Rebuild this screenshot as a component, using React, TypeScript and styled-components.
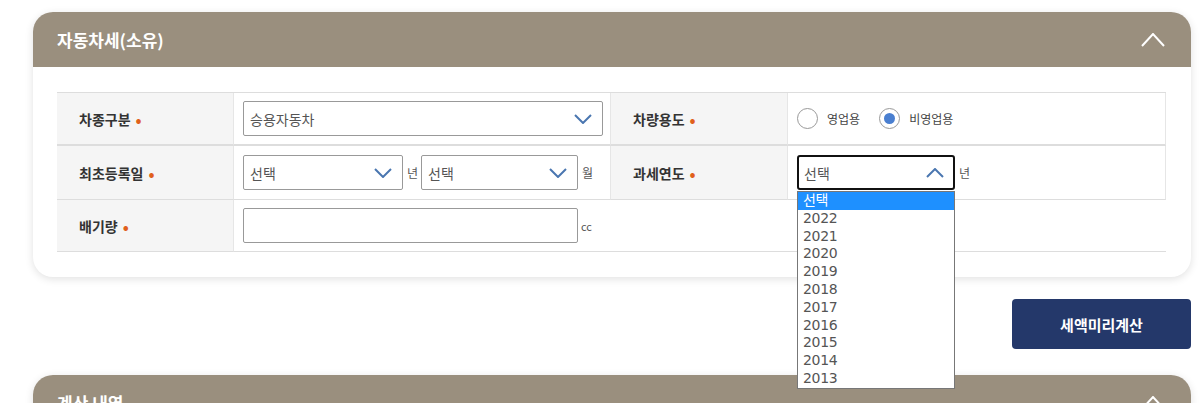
import React from 'react';
import styled, { createGlobalStyle } from 'styled-components';

const GlobalStyle = createGlobalStyle`
  html, body {
    margin: 0;
    padding: 0;
    background: #fff;
    font-family: "Noto Sans CJK KR", "Noto Sans", sans-serif;
    color: #333;
  }
  * { box-sizing: border-box; }
`;

const Page = styled.div`
  padding: 12px 9px 0 33px;
  display: flex;
  flex-direction: column;
  height: 403px;
  overflow: hidden;
`;

const Card = styled.section`
  background: #fff;
  border-radius: 20px;
  box-shadow: 0 2px 8px rgba(0, 0, 0, 0.12);
  flex-shrink: 0;
`;

const CardHeader = styled.header`
  height: 55px;
  background: #9a8f7e;
  border-radius: 20px 20px 0 0;
  display: flex;
  align-items: center;
  justify-content: space-between;
  padding: 0 26px 0 24px;
  color: #fff;
  font-size: 17px;
  font-weight: 700;
`;

const CardBody = styled.div`
  padding: 25px 25px 25px 24px;
`;

const Table = styled.div`
  display: grid;
  grid-template-columns: 177px 377px 177px 1fr;
  border-top: 1px solid #ddd;
`;

const Label = styled.div<{ $height: number; $thick?: boolean }>`
  height: ${p => p.$height}px;
  background: #f5f5f5;
  display: flex;
  align-items: center;
  padding-left: 22px;
  font-size: 14px;
  font-weight: 700;
  color: #333;
  border-bottom: ${p => (p.$thick ? '2px' : '1px')} solid #ddd;
  border-right: 1px solid #e6e6e6;
`;

const Dot = styled.span`
  color: #e0601c;
  margin-left: 5px;
  font-size: 16px;
`;

const Cell = styled.div<{ $height: number; $thick?: boolean; $span?: number }>`
  height: ${p => p.$height}px;
  grid-column: span ${p => p.$span ?? 1};
  display: flex;
  align-items: center;
  padding-left: 9px;
  gap: 4px;
  font-size: 14px;
  color: #555;
  border-bottom: ${p => (p.$thick ? '2px' : '1px')} solid #ddd;
  border-right: 1px solid #e6e6e6;
  &:last-child { border-right: none; }
`;

const SelectBox = styled.div<{ $width: number; $focused?: boolean }>`
  position: relative;
  width: ${p => p.$width}px;
  height: 35px;
  border: ${p => (p.$focused ? '2px solid #111' : '1px solid #999')};
  border-radius: ${p => (p.$focused ? '3px' : '2px')};
  display: flex;
  align-items: center;
  justify-content: space-between;
  padding: 0 ${p => (p.$focused ? 9 : 10)}px 0 ${p => (p.$focused ? 5 : 6)}px;
  font-size: 14px;
  color: #555;
  background: #fff;
`;

const TextInput = styled.div<{ $width: number }>`
  width: ${p => p.$width}px;
  height: 35px;
  border: 1px solid #999;
  border-radius: 2px;
  background: #fff;
`;

const Unit = styled.span<{ $small?: boolean; $tight?: boolean }>`
  font-size: ${p => (p.$small ? '11px' : '12px')};
  color: #555;
  margin-right: ${p => (p.$tight ? '-1px' : '0')};
  margin-left: ${p => (p.$small ? '-1px' : '0')};
`;

const DropList = styled.ul`
  position: absolute;
  top: 34px;
  left: -2px;
  width: 158px;
  margin: 0;
  padding: 0;
  list-style: none;
  background: #fff;
  border: 1px solid #777;
  z-index: 10;
`;

const DropItem = styled.li<{ $active?: boolean }>`
  height: 17.8px;
  line-height: 17.8px;
  padding-left: 5px;
  font-size: 14px;
  font-family: "DejaVu Sans", "Noto Sans CJK KR", sans-serif;
  letter-spacing: -0.3px;
  background: ${p => (p.$active ? '#1e90ff' : '#fff')};
  color: ${p => (p.$active ? '#fff' : '#555')};
`;

const RadioGroup = styled.div`
  display: flex;
  align-items: center;
  gap: 10px;
  font-size: 12px;
  color: #444;
`;

const RadioItem = styled.label`
  display: flex;
  align-items: center;
  gap: 9px;
  margin-right: 9px;
`;

const RadioCircle = styled.span<{ $checked?: boolean }>`
  width: 21px;
  height: 21px;
  border-radius: 50%;
  border: 1px solid #999;
  background: #fff;
  display: flex;
  align-items: center;
  justify-content: center;
  &::after {
    content: '';
    width: 11px;
    height: 11px;
    border-radius: 50%;
    background: ${p => (p.$checked ? '#4a7fd0' : 'transparent')};
  }
`;

const ButtonRow = styled.div`
  display: flex;
  justify-content: flex-end;
  margin-top: 22px;
`;

const CalcButton = styled.button`
  width: 179px;
  height: 50px;
  background: #24386a;
  color: #fff;
  border: none;
  border-radius: 4px;
  font-family: inherit;
  font-size: 15px;
  font-weight: 700;
`;

const SecondCard = styled(Card)`
  margin-top: 26px;
`;

const Chevron = ({ up, color, w, h, sw }: { up?: boolean; color: string; w: number; h: number; sw: number }) => (
  <svg width={w} height={h} viewBox={`0 0 ${w} ${h}`} fill="none">
    <polyline
      points={up ? `1,${h - 1} ${w / 2},1 ${w - 1},${h - 1}` : `1,1 ${w / 2},${h - 1} ${w - 1},1`}
      stroke={color}
      strokeWidth={sw}
      strokeLinejoin="miter"
    />
  </svg>
);

const years = ['2022', '2021', '2020', '2019', '2018', '2017', '2016', '2015', '2014', '2013'];

export default function App() {
  return (
    <Page>
      <GlobalStyle />
      <Card>
        <CardHeader>
          자동차세(소유)
          <Chevron up color="#fff" w={24} h={14} sw={2} />
        </CardHeader>
        <CardBody>
          <Table>
            <Label $height={53} $thick>차종구분<Dot>•</Dot></Label>
            <Cell $height={53} $thick>
              <SelectBox $width={360}>
                승용자동차
                <Chevron color="#4a76b0" w={18} h={10} sw={2} />
              </SelectBox>
            </Cell>
            <Label $height={53} $thick>차량용도<Dot>•</Dot></Label>
            <Cell $height={53} $thick>
              <RadioGroup>
                <RadioItem><RadioCircle />영업용</RadioItem>
                <RadioItem><RadioCircle $checked />비영업용</RadioItem>
              </RadioGroup>
            </Cell>

            <Label $height={54}>최초등록일<Dot>•</Dot></Label>
            <Cell $height={54}>
              <SelectBox $width={160}>
                선택
                <Chevron color="#4a76b0" w={18} h={10} sw={2} />
              </SelectBox>
              <Unit $tight>년</Unit>
              <SelectBox $width={157}>
                선택
                <Chevron color="#4a76b0" w={18} h={10} sw={2} />
              </SelectBox>
              <Unit>월</Unit>
            </Cell>
            <Label $height={54}>과세연도<Dot>•</Dot></Label>
            <Cell $height={54}>
              <SelectBox $width={158} $focused>
                선택
                <Chevron up color="#4a76b0" w={18} h={10} sw={2} />
                <DropList>
                  <DropItem $active>선택</DropItem>
                  {years.map(y => (
                    <DropItem key={y}>{y}</DropItem>
                  ))}
                </DropList>
              </SelectBox>
              <Unit>년</Unit>
            </Cell>

            <Label $height={52}>배기량<Dot>•</Dot></Label>
            <Cell $height={52} $span={3}>
              <TextInput $width={335} />
              <Unit $small>cc</Unit>
            </Cell>
          </Table>
        </CardBody>
      </Card>

      <ButtonRow>
        <CalcButton>세액미리계산</CalcButton>
      </ButtonRow>

      <SecondCard>
        <CardHeader>
          계산 내역
          <Chevron up color="#fff" w={24} h={14} sw={2} />
        </CardHeader>
      </SecondCard>
    </Page>
  );
}
